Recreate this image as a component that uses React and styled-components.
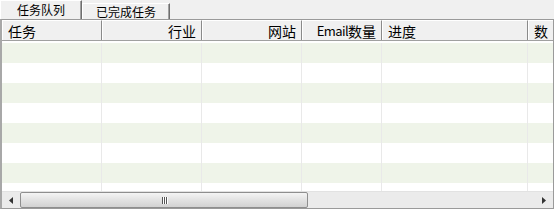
import React from "react";
import styled, { createGlobalStyle } from "styled-components";

const Global = createGlobalStyle`
  html, body { margin: 0; padding: 0; background: #f0f0f0; }
  body { font-family: "Noto Sans CJK SC", "Liberation Sans", sans-serif; }
  #root { width: 554px; height: 209px; overflow: hidden; }
`;

const Page = styled.div`
  width: 554px;
  height: 209px;
  display: flex;
  flex-direction: column;
  background: #f0f0f0;
`;

const TabBar = styled.div`
  display: flex;
  align-items: flex-end;
  height: 19px;
`;

const Tab = styled.div`
  box-sizing: border-box;
  width: ${(p) => p.$w}px;
  height: ${(p) => (p.$active ? 19 : 16)}px;
  border-top: 1px solid #ffffff;
  border-left: 1px solid #ffffff;
  border-right: 1px solid #6e6e6e;
  box-shadow: inset -1px 0 0 #a0a0a0;
  display: flex;
  align-items: center;
  justify-content: center;
  font-size: 12px;
  line-height: 1;
  color: #000;
  padding-top: ${(p) => (p.$active ? 0 : 1)}px;
`;

const Frame = styled.div`
  box-sizing: border-box;
  flex: 1;
  border: 1px solid #9a9a9a;
  border-left-width: 2px;
  border-left-color: #a8a8a8;
  display: flex;
  flex-direction: column;
  overflow: hidden;
  background: #ffffff;
`;

const Header = styled.div`
  display: flex;
  height: 21px;
  flex: none;
  background: #f0f0f0;
  border-bottom: 1px solid #a0a0a0;
  box-sizing: border-box;
`;

const HeadCell = styled.div`
  box-sizing: border-box;
  flex: none;
  width: ${(p) => p.$w}px;
  border-left: 1px solid #ffffff;
  border-top: 1px solid #ffffff;
  border-right: 1px solid #8a8a8a;
  display: flex;
  align-items: center;
  justify-content: ${(p) => (p.$right ? "flex-end" : "flex-start")};
  padding: 0 5px 0 5px;
  font-size: 14px;
  line-height: 1;
  color: #000;
  white-space: nowrap;
  overflow: hidden;
`;

const Latin = styled.span`
  font-size: 13px;
  letter-spacing: -0.6px;
`;

const Body = styled.div`
  flex: 1;
  overflow: hidden;
  padding-top: 2px;
  background: #ffffff;
`;

const Row = styled.div`
  display: flex;
  height: 20px;
  background: ${(p) => (p.$alt ? "#eff4e9" : "#ffffff")};
`;

const Cell = styled.div`
  box-sizing: border-box;
  flex: none;
  width: ${(p) => p.$w}px;
  height: 100%;
  border-right: 1px solid #e9e9e9;
`;

const HScroll = styled.div`
  flex: none;
  height: 17px;
  display: flex;
  align-items: stretch;
  background: #ebebeb;
  border-top: 1px solid #e2e2e2;
  box-sizing: border-box;
`;

const ArrowBtn = styled.div`
  flex: none;
  width: 18px;
  display: flex;
  align-items: center;
  justify-content: center;
`;

const Track = styled.div`
  flex: 1;
  display: flex;
  align-items: stretch;
`;

const Thumb = styled.div`
  box-sizing: border-box;
  width: 288px;
  border: 1px solid #8e8e8e;
  border-radius: 2px;
  background: linear-gradient(#f4f4f4, #e2e2e2 50%, #d2d2d2);
  display: flex;
  align-items: center;
  justify-content: center;
`;

const Grip = styled.div`
  display: flex;
  & > span {
    display: block;
    width: 1px;
    height: 7px;
    background: #555;
    box-shadow: 1px 0 0 #fff;
  }
  & > span + span { margin-left: 1px; }
`;

const cols = [
  { t: "任务", w: 100 },
  { t: "行业", w: 100, r: true },
  { t: "网站", w: 100, r: true },
  { t: "数量", pre: "Email", w: 80, r: true },
  { t: "进度", w: 146 },
  { t: "数", w: 80 },
];

export default function App() {
  const rows = Array.from({ length: 8 }, (_, i) => i);
  return (
    <Page>
      <Global />
      <TabBar>
        <Tab $w={82} $active>任务队列</Tab>
        <Tab $w={88}>已完成任务</Tab>
      </TabBar>
      <Frame>
        <Header>
          {cols.map((c) => (
            <HeadCell key={c.t + c.w} $w={c.w} $right={c.r}>
              {c.pre && <Latin>{c.pre}</Latin>}
              {c.t}
            </HeadCell>
          ))}
        </Header>
        <Body>
          {rows.map((i) => (
            <Row key={i} $alt={i % 2 === 0}>
              {cols.map((c) => (
                <Cell key={c.t + c.w} $w={c.w} />
              ))}
            </Row>
          ))}
        </Body>
        <HScroll>
          <ArrowBtn>
            <svg width="4" height="7" viewBox="0 0 4 7">
              <path d="M4 0 L0 3.5 L4 7 Z" fill="#333" />
            </svg>
          </ArrowBtn>
          <Track>
            <Thumb>
              <Grip>
                <span />
                <span />
                <span />
              </Grip>
            </Thumb>
          </Track>
          <ArrowBtn>
            <svg width="4" height="7" viewBox="0 0 4 7">
              <path d="M0 0 L4 3.5 L0 7 Z" fill="#333" />
            </svg>
          </ArrowBtn>
        </HScroll>
      </Frame>
    </Page>
  );
}
